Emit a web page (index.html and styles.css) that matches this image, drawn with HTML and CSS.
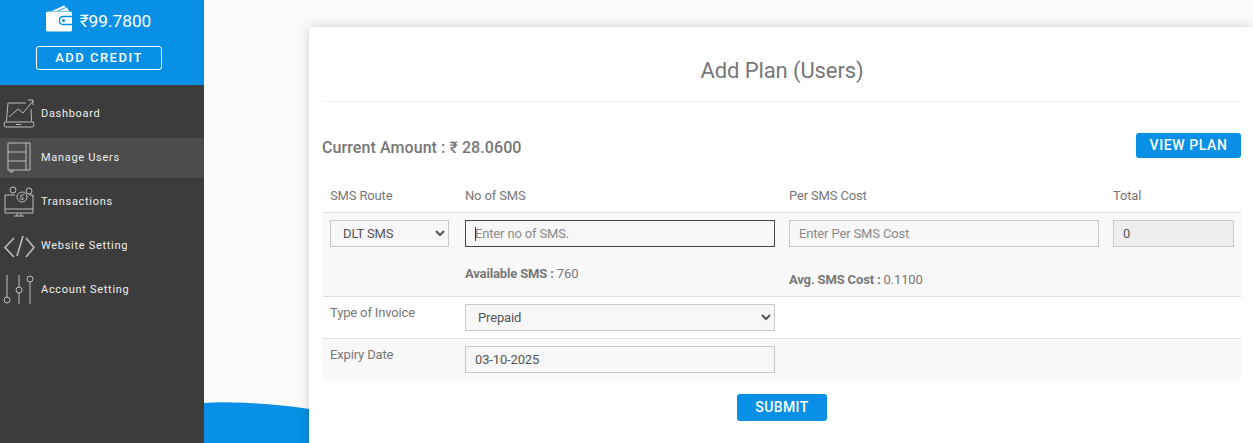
FILE: index.html
```html
<!DOCTYPE html>
<html lang="en">

<head>
    <meta charset="UTF-8">
    <meta name="viewport" content="width=device-width, initial-scale=1.0">
    <title>Add Plan (Users)</title>
    <link rel="stylesheet" href="styles.css">
</head>

<body>
    <div class="page">
        <aside class="sidebar">
            <div class="balance-box">
                <div class="balance">
                    <svg class="wallet" viewBox="0 0 28 28" width="28" height="28">
                        <path fill="#fff" d="M7 6 L19 0.500 L21 2 L12 6 Z M14 6 L22 2.500 L24 6 Z" />
                        <path fill="#fff" d="M1 8 Q1 6.500 3 6.500 L25 6.500 Q27 6.500 27 8 L27 25 Q27 26.500 25 26.500 L3 26.500 Q1 26.500 1 25 Z" />
                        <path fill="none" stroke="#0790e5" stroke-width="1.300" d="M27 11.500 L18 11.500 Q14.500 11.500 14.500 15.500 Q14.500 19.500 18 19.500 L27 19.500" />
                        <circle cx="18.500" cy="15.500" r="1.500" fill="#0790e5" />
                    </svg>
                    <span class="balance-value">₹99.7800</span>
                </div>
                <a class="add-credit">ADD CREDIT</a>
            </div>
            <ul class="menu">
                <li class="menu-item">
                    <svg class="menu-icon" viewBox="0 0 32 32" width="32" height="32">
                        <path d="M6 6 L4.500 24 M6 6 L24 6 M29 12 L29.500 24 M2.500 25 L31.500 25 L32 28 Q32 30 30 30 L4 30 Q2 30 2 28 Z M14 27.500 L19 27.500" />
                        <path d="M7 20 L16 12 L21 16 L31 4 M26 3 L31 3 L31 8" />
                    </svg>
                    <span>Dashboard</span>
                </li>
                <li class="menu-item active">
                    <svg class="menu-icon" viewBox="0 0 32 32" width="32" height="32">
                        <path d="M6 2 L28 2 L28 29 L6 29 Z M24 2 L24 29 M6 11 L24 11 M6 20 L24 20 M8 29 L8 31 L11 31 L11 29" />
                    </svg>
                    <span>Manage Users</span>
                </li>
                <li class="menu-item">
                    <svg class="menu-icon" viewBox="0 0 32 32" width="32" height="32">
                        <path d="M13 10 L3 10 L3 28 L31 28 L31 10 L27 10 M3 24 L31 24 M15 28 L15 31 M19 28 L19 31 M12 31 L22 31" />
                        <circle cx="20" cy="12" r="5" />
                        <path d="M22 10 Q18 9.500 18.500 11.500 Q21.500 12.500 21.500 14 Q19 15 17.500 13.500" />
                        <circle cx="11" cy="5" r="3" />
                        <circle cx="27" cy="6" r="3" />
                    </svg>
                    <span>Transactions</span>
                </li>
                <li class="menu-item">
                    <svg class="menu-icon icon-code" viewBox="0 0 32 32" width="32" height="32">
                        <path d="M12 9 L3 18.500 L12 28 M24 9 L32 18.500 L24 28 M21 7 L15 27" />
                    </svg>
                    <span>Website Setting</span>
                </li>
                <li class="menu-item">
                    <svg class="menu-icon" viewBox="0 0 32 32" width="32" height="32">
                        <path d="M5 2 L5 24 M17 2 L17 14 M17 20 L17 31 M28 9 L28 31" />
                        <circle cx="5" cy="27" r="3" />
                        <circle cx="17" cy="17" r="3" />
                        <circle cx="28" cy="6" r="3" />
                    </svg>
                    <span>Account Setting</span>
                </li>
            </ul>
        </aside>

        <main class="main-content">
            <svg class="wave" viewBox="0 0 105 41" width="105" height="41">
                <path fill="#0790e5" d="M0 1 Q12 0 30 0.500 Q70 1.500 105 7 L105 41 L0 41 Z" />
            </svg>

            <section class="card">
                <h1 class="card-title">Add Plan (Users)</h1>

                <div class="amount-row">
                    <h2 class="amount">Current Amount : ₹ 28.0600</h2>
                    <a class="btn btn-view">VIEW PLAN</a>
                </div>

                <table class="plan-table">
                    <colgroup>
                        <col class="col-route">
                        <col class="col-sms">
                        <col class="col-cost">
                        <col class="col-total">
                    </colgroup>
                    <thead>
                        <tr>
                            <th>SMS Route</th>
                            <th>No of SMS</th>
                            <th>Per SMS Cost</th>
                            <th>Total</th>
                        </tr>
                    </thead>
                    <tbody>
                        <tr class="row-odd">
                            <td>
                                <select class="field field-route">
                                    <option>DLT SMS</option>
                                </select>
                            </td>
                            <td>
                                <div class="caret-wrap">
                                    <input class="field" type="text" placeholder="Enter no of SMS." autofocus>
                                </div>
                                <p class="note">
                                    <b>Available SMS :</b> 760
                                </p>
                            </td>
                            <td>
                                <input class="field" type="text" placeholder="Enter Per SMS Cost">
                                <p class="note note-low">
                                    <b>Avg. SMS Cost :</b> 0.1100
                                </p>
                            </td>
                            <td>
                                <input class="field field-readonly" type="text" value="0" readonly>
                            </td>
                        </tr>
                        <tr>
                            <td>Type of Invoice</td>
                            <td>
                                <select class="field">
                                    <option>Prepaid</option>
                                </select>
                            </td>
                            <td></td>
                            <td></td>
                        </tr>
                        <tr class="row-odd">
                            <td>Expiry Date</td>
                            <td>
                                <input class="field" type="text" value="03-10-2025">
                            </td>
                            <td></td>
                            <td></td>
                        </tr>
                    </tbody>
                </table>

                <div class="submit-row">
                    <a class="btn btn-submit">SUBMIT</a>
                </div>
            </section>
        </main>
    </div>
</body>

</html>
```

FILE: styles.css
```css
* {
    box-sizing: border-box;
    margin: 0;
    padding: 0;
}

html,
body {
    height: 100%;
    overflow: hidden;
}

body {
    font-family: Roboto, "Liberation Sans", sans-serif;
    background-color: #fbfbfb;
    color: #777;
}

.page {
    display: flex;
    height: 443px;
}

/* Sidebar */
.sidebar {
    width: 204px;
    flex-shrink: 0;
    background-color: #3d3c3d;
}

.balance-box {
    height: 85px;
    padding-right: 6px;
    background-color: #0790e5;
    display: flex;
    flex-direction: column;
    align-items: center;
}

.balance {
    display: flex;
    align-items: flex-start;
    gap: 7px;
    height: 46px;
    margin-right: 2px;
    padding-top: 5px;
    color: #fff;
}

.balance-value {
    font-size: 17.250px;
    line-height: 32px;
}

.add-credit {
    width: 126px;
    height: 24px;
    border: 1px solid #fff;
    border-radius: 3px;
    color: #fff;
    font-size: 13px;
    font-weight: 500;
    letter-spacing: 1.500px;
    line-height: 22px;
    text-align: center;
}

.menu {
    list-style: none;
    padding-top: 6px;
}

.menu-item {
    display: flex;
    align-items: center;
    gap: 7px;
    height: 44px;
    padding-left: 2px;
    color: #eee;
    font-size: 11px;
    letter-spacing: 0.700px;
}

.menu-item.active {
    background-color: #4c4c4c;
    background-clip: padding-box;
    border-top: 3px solid transparent;
    border-bottom: 1px solid transparent;
    padding-bottom: 2px;
}

.menu-icon {
    flex-shrink: 0;
    overflow: visible;
    fill: none;
    stroke: #bdbdbd;
    stroke-width: 1;
}

.icon-code {
    stroke-width: 1.600;
}

/* Main */
.main-content {
    flex: 1;
    position: relative;
    padding: 27px 0 0 105px;
    overflow: hidden;
}

.wave {
    position: absolute;
    left: 0;
    bottom: 0;
}

.card {
    position: relative;
    height: 500px;
    background-color: #fff;
    padding: 0 12px 0 14px;
    box-shadow: 0 0 12px rgba(0, 0, 0, 0.18);
}

.card-title {
    height: 75px;
    border-bottom: 1px solid #eee;
    font-size: 22px;
    font-weight: 400;
    letter-spacing: -0.100px;
    line-height: 88px;
    text-align: center;
    color: #777;
}

.amount-row {
    display: flex;
    justify-content: space-between;
    align-items: center;
    margin-top: 31px;
    height: 25px;
}

.amount {
    padding-top: 4px;
    margin-left: -1px;
    font-size: 16px;
    font-weight: 500;
    letter-spacing: 0.080px;
    color: #777;
}

.btn {
    display: block;
    background-color: #0790e5;
    border-radius: 3px;
    color: #fff;
    font-size: 14px;
    font-weight: 500;
    text-align: center;
}

.btn-view {
    width: 105px;
    height: 25px;
    line-height: 25px;
    letter-spacing: 0.600px;
}

/* Table */
.plan-table {
    width: 100%;
    margin-top: 20px;
    border-collapse: collapse;
    table-layout: fixed;
    font-size: 13px;
    letter-spacing: -0.150px;
}

.col-route {
    width: 135px;
}

.col-sms {
    width: 324px;
}

.col-cost {
    width: 324px;
}

.plan-table th {
    height: 34px;
    padding: 2px 7px 0;
    font-weight: 400;
    text-align: left;
    border-bottom: 1px solid #ddd;
}

.plan-table td {
    padding: 7px;
    vertical-align: top;
    line-height: 18px;
    border-bottom: 1px solid #ddd;
}

.plan-table tr:last-child td {
    border-bottom: none;
    padding-bottom: 8px;
}

.row-odd {
    background-color: #f9f9f9;
}

.field {
    display: block;
    width: 100%;
    height: 27px;
    padding: 0 9px;
    background-color: #f7f7f7;
    border: 1px solid #c8c8c8;
    color: #555;
    font-family: inherit;
    font-size: 13px;
    letter-spacing: -0.150px;
    outline: none;
}

select.field {
    padding-left: 8px;
}

select.field-route {
    width: 119px;
}

.field:focus {
    border-color: #444;
}

.field::placeholder {
    color: #8a8a8a;
    opacity: 1;
}

.field-readonly {
    background-color: #eee;
}

/* text cursor of the focused input */
.caret-wrap {
    position: relative;
}

.caret-wrap::after {
    content: "";
    position: absolute;
    left: 10px;
    top: 7px;
    width: 1px;
    height: 14px;
    background-color: #333;
}

.note {
    margin-top: 18px;
}

.note-low {
    margin-top: 24px;
}

.submit-row {
    display: flex;
    justify-content: center;
    margin-top: 13px;
}

.btn-submit {
    width: 90px;
    height: 27px;
    line-height: 27px;
    letter-spacing: 0.400px;
}
```
